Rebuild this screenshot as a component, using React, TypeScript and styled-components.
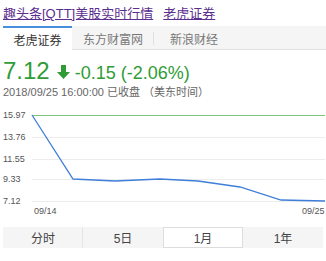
import styled, { createGlobalStyle } from "styled-components";

const GlobalStyle = createGlobalStyle`
  html, body {
    margin: 0;
    padding: 0;
    background: #fff;
  }
  body {
    font-family: "Liberation Sans", "Noto Sans CJK SC", sans-serif;
    width: 326px;
    overflow: hidden;
  }
`;

// STYLED
const Page = styled.div`
  display: flex;
  flex-direction: column;
  width: 326px;
  padding-left: 3px;
  box-sizing: border-box;
`;
const Title = styled.div`
  display: flex;
  gap: 10px;
  height: 24px;
  padding-top: 4px;
  box-sizing: border-box;
  margin-bottom: 2px;
  font-size: 13px;
  line-height: 20px;
  white-space: nowrap;
  a {
    color: #5b2d8e;
    text-decoration: underline;
  }
`;
const TabBar = styled.div`
  display: flex;
  height: 24px;
  box-sizing: border-box;
  background: #f5f5f5;
  border-bottom: 1px solid #e2e2e2;
`;
const Tab = styled.div<{ $active?: boolean; $w: number; $sep?: boolean }>`
  display: flex;
  align-items: center;
  justify-content: center;
  width: ${(p) => p.$w}px;
  box-sizing: border-box;
  font-size: 12px;
  color: ${(p) => (p.$active ? "#333" : "#777")};
  background: ${(p) => (p.$active ? "#fff" : "transparent")};
  border-top: 2px solid ${(p) => (p.$active ? "#4a8fdc" : "transparent")};
  margin-bottom: ${(p) => (p.$active ? "-1px" : "0")};
  position: relative;
  &::after {
    content: "";
    display: ${(p) => (p.$sep ? "block" : "none")};
    position: absolute;
    right: 0;
    top: 4px;
    bottom: 4px;
    width: 1px;
    background: #e0e0e0;
  }
`;
const PriceRow = styled.div`
  display: flex;
  align-items: baseline;
  margin-top: 7px;
  height: 28px;
  line-height: 28px;
  color: #2f9c36;
  white-space: nowrap;
`;
const Price = styled.span`
  font-size: 24px;
`;
const Arrow = styled.svg`
  width: 13px;
  height: 14px;
  margin: 0 5px 0 7px;
  align-self: center;
  position: relative;
  top: 1px;
`;
const Change = styled.span`
  font-size: 18px;
`;
const DateLine = styled.div`
  font-size: 11px;
  line-height: 14px;
  height: 15px;
  color: #666;
  white-space: nowrap;
`;
const Chart = styled.svg`
  display: block;
  margin-left: -3px;
  width: 326px;
  height: 128px;
  text {
    font-family: "Liberation Sans", sans-serif;
    font-size: 9px;
    fill: #555;
  }
`;
const RangeBar = styled.div`
  display: flex;
  width: 320px;
  height: 21px;
  margin-top: -1px;
  background: #f5f5f5;
`;
const RangeItem = styled.div<{ $active?: boolean; $sep?: boolean }>`
  flex: 1;
  display: flex;
  align-items: center;
  justify-content: center;
  box-sizing: border-box;
  font-size: 12px;
  color: #444;
  background: ${(p) => (p.$active ? "#fff" : "transparent")};
  border: 1px solid ${(p) => (p.$active ? "#ddd" : "transparent")};
  border-right: 1px solid
    ${(p) => (p.$active ? "#ddd" : p.$sep ? "#e4e4e4" : "transparent")};
`;

// chart data, page coordinates shifted by chart top (100)
const top = 100;
const gridY = [115, 137, 159, 179, 201];
const labels = ["15.97", "13.76", "11.55", "9.33", "7.12"];
const points: [number, number][] = [
  [32, 115],
  [73, 179],
  [115, 181],
  [160, 179],
  [198, 181],
  [240, 187],
  [281, 200],
  [325, 201],
];

export default function App() {
  return (
    <>
      <GlobalStyle />
      <Page>
        <Title>
          <a href="#">趣头条[QTT]美股实时行情</a>
          <a href="#">老虎证券</a>
        </Title>
        <TabBar>
          <Tab $active $w={69}>
            老虎证券
          </Tab>
          <Tab $w={82} $sep>
            东方财富网
          </Tab>
          <Tab $w={80}>新浪财经</Tab>
        </TabBar>
        <PriceRow>
          <Price>7.12</Price>
          <Arrow viewBox="0 0 13 14">
            <path d="M4 0h5v7h4l-6.5 7L0 7h4z" fill="#2f9c36" />
          </Arrow>
          <Change>-0.15 (-2.06%)</Change>
        </PriceRow>
        <DateLine>2018/09/25 16:00:00 已收盘 （美东时间）</DateLine>
        <Chart viewBox="0 0 326 128">
          {gridY.map((y, i) => (
            <g key={y}>
              <line
                x1={32}
                x2={325}
                y1={y - top + 0.5}
                y2={y - top + 0.5}
                stroke={i === 0 ? "#7cc67c" : "#ececec"}
                strokeWidth={1}
              />
              <text x={3} y={y - top + 3}>
                {labels[i]}
              </text>
            </g>
          ))}
          <polyline
            points={points.map(([x, y]) => `${x},${y - top}`).join(" ")}
            fill="none"
            stroke="#3f7fd9"
            strokeWidth={1.3}
          />
          <text x={34} y={114}>
            09/14
          </text>
          <text x={302} y={114}>
            09/25
          </text>
        </Chart>
        <RangeBar>
          <RangeItem $sep>分时</RangeItem>
          <RangeItem>5日</RangeItem>
          <RangeItem $active>1月</RangeItem>
          <RangeItem>1年</RangeItem>
        </RangeBar>
      </Page>
    </>
  );
}
